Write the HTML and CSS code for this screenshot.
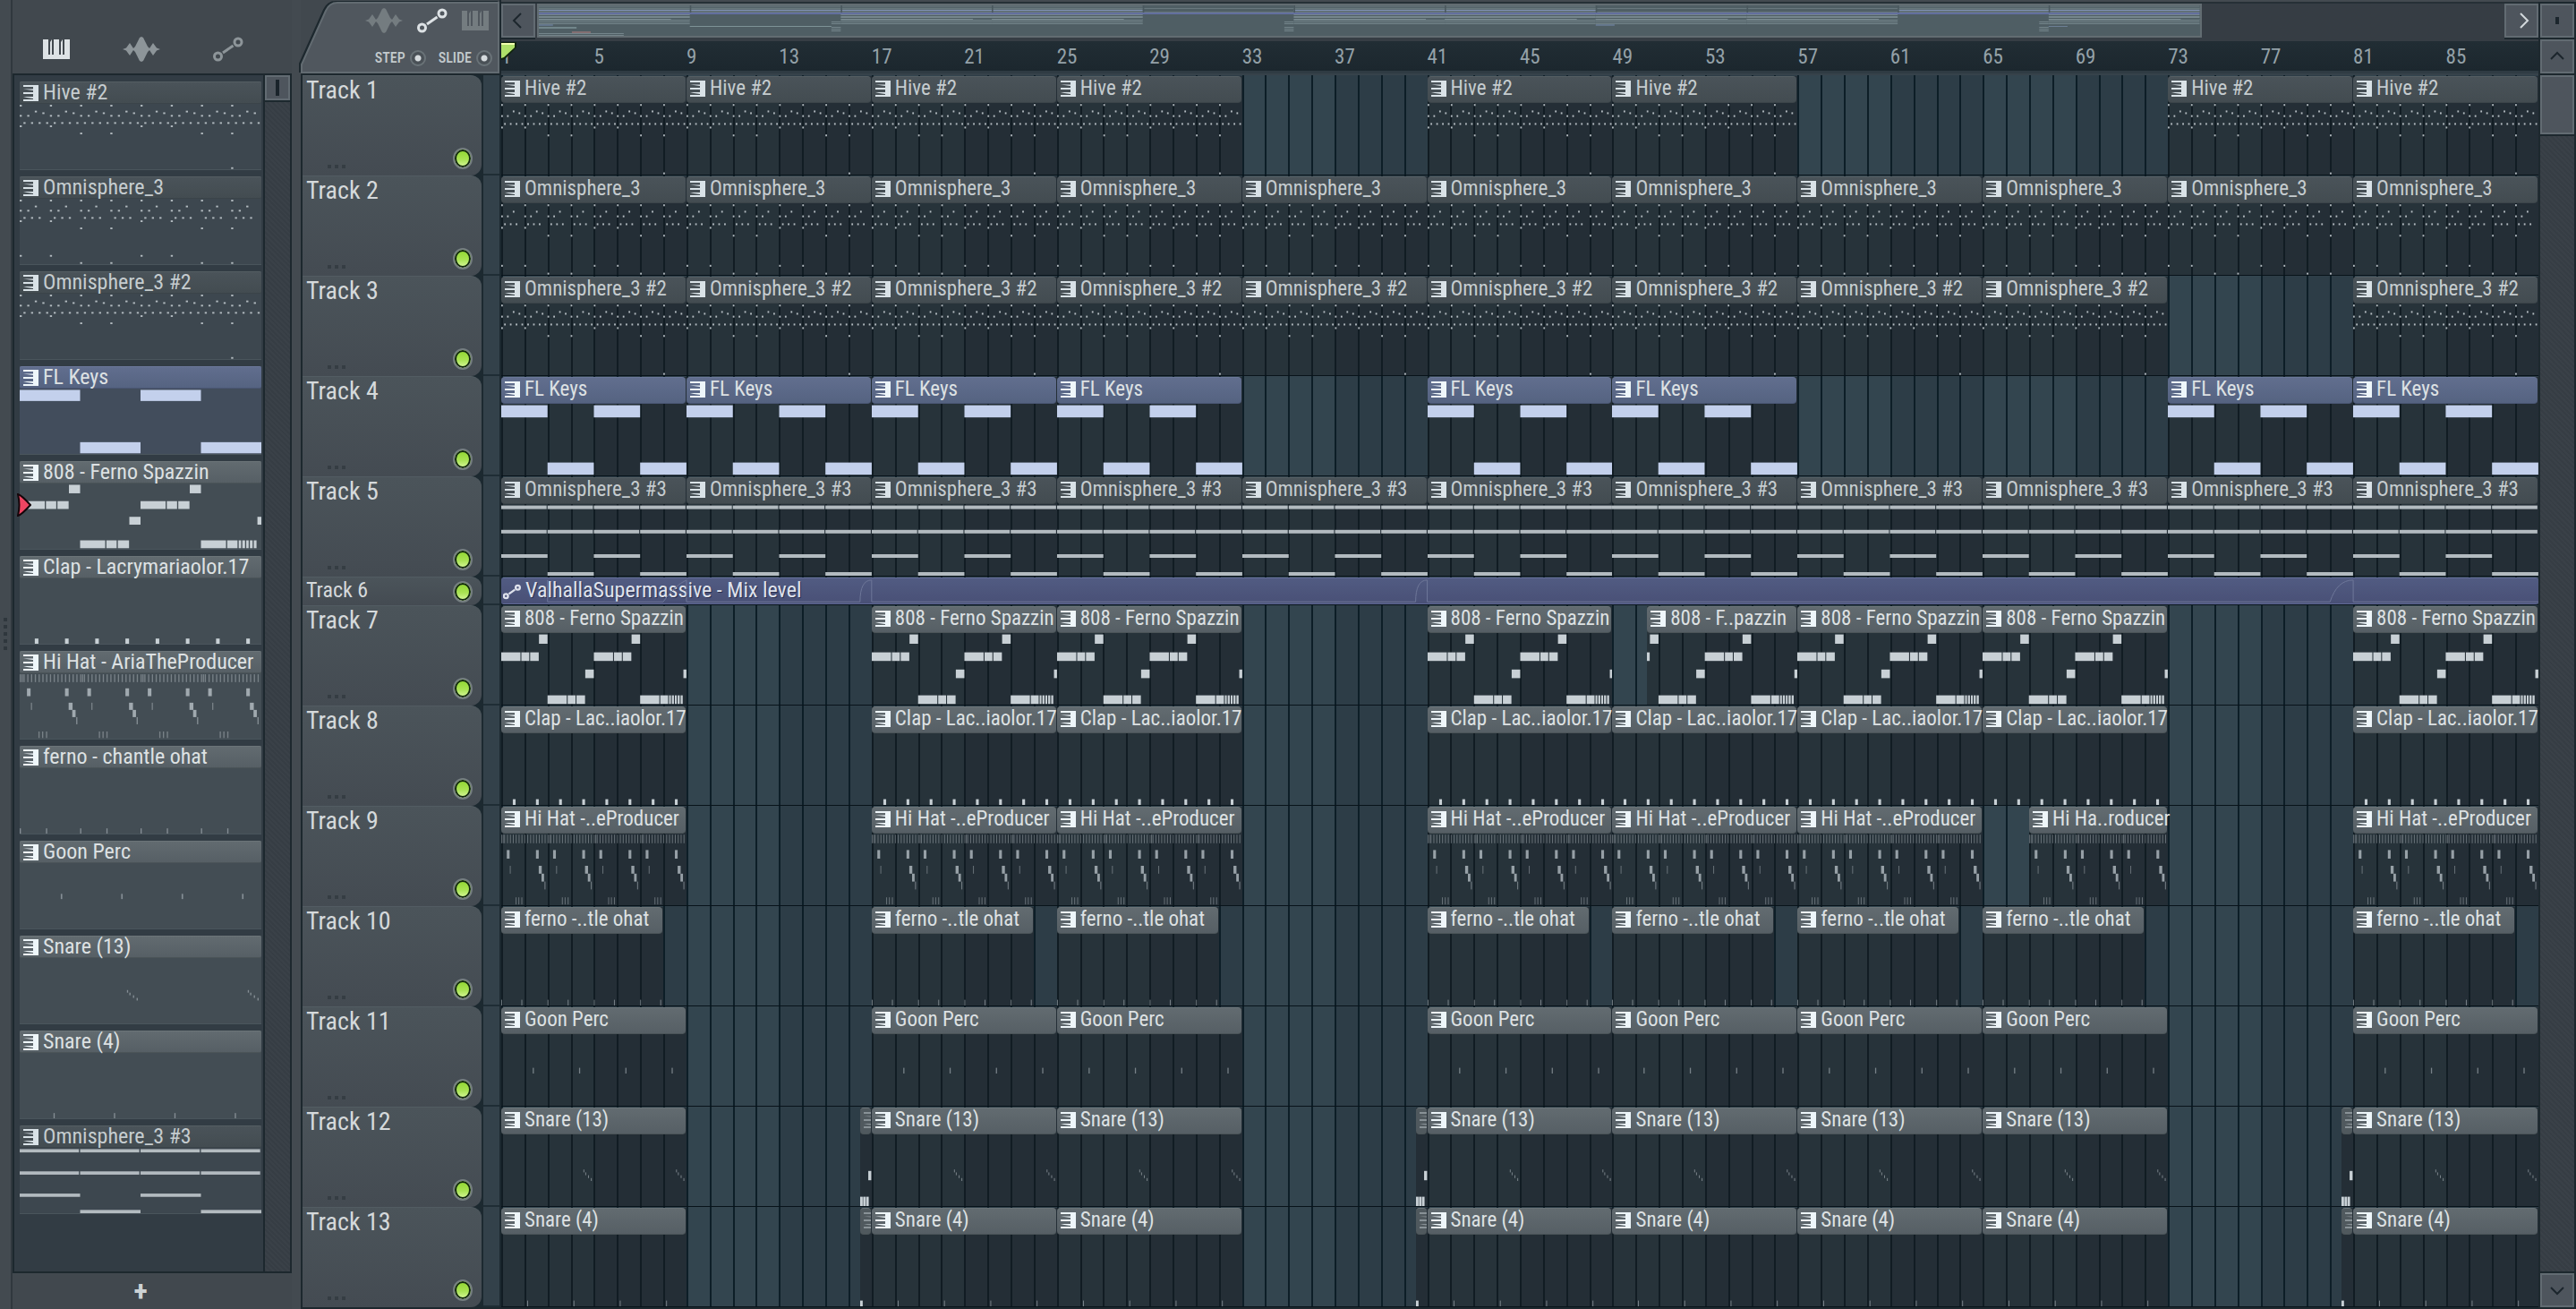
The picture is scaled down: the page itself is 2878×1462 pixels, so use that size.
FILE: index.html
```html
<!DOCTYPE html>
<html lang="en">
<head>
  <meta charset="UTF-8">
  <meta name="viewport" content="width=device-width, initial-scale=1.0">
  <title>Playlist</title>
  <link rel="stylesheet" href="styles.css">
</head>
<body>
  <!-- Shared icons -->
  <svg class="defs" aria-hidden="true">
    <symbol id="piano" viewBox="0 0 30 22">
      <path d="M0 0H6V17H8L8 3L10 0V17H12V0H18V17H20L20 3L22 0V17H24V0H30V22H0Z"/>
    </symbol>
    <symbol id="wave" viewBox="0 0 42 28">
      <path d="M0 14L4 12.500 8 7 12 13 14 11 16 7 19 1 21 0 23 1 26 7 28 11 30 13 34 7 38 12.500 42 14 38 15.500 34 21 30 15 28 17 26 21 23 27 21 28 19 27 16 21 14 17 12 15 8 21 4 15.500Z"/>
    </symbol>
    <symbol id="curve" viewBox="0 0 34 28">
      <g fill="none" stroke="currentColor">
        <circle cx="5.500" cy="22" r="4"/>
        <circle cx="28" cy="6" r="4"/>
        <path d="M11 18L22.500 10"/>
      </g>
    </symbol>
    <symbol id="pattern" viewBox="0 0 17 18">
      <path d="M0 0H17V18H0V16H11V15L4 14L0 13H11V10H0V8H11V6L4 5L0 4.500H11V2H0Z"/>
    </symbol>
  </svg>

  <div class="grip"><i></i><i></i><i></i><i></i><i></i></div>

  <!-- Pattern picker -->
  <aside class="picker">
    <nav class="picker-tabs">
      <button class="tab-icon on" aria-label="Patterns"><svg class="ico-piano"><use href="#piano"/></svg></button>
      <button class="tab-icon" aria-label="Audio clips"><svg class="ico-wave"><use href="#wave"/></svg></button>
      <button class="tab-icon" aria-label="Automation"><svg class="ico-curve"><use href="#curve"/></svg></button>
    </nav>
    <div class="picker-body">
      <div class="picker-list" id="picker"></div>
      <div class="picker-scroll"><button class="thumb" aria-label="Scroll"><i></i></button></div>
    </div>
    <button class="add" aria-label="Add pattern">+</button>
  </aside>

  <!-- Playlist -->
  <main class="playlist">
    <div class="corner">
      <svg class="corner-shape" viewBox="0 0 222 80" preserveAspectRatio="none">
        <path d="M1 79V70L28 10Q32 1 41 1H221V79Z"/>
      </svg>
      <div class="corner-icons">
        <button class="tab-icon dim" aria-label="Audio"><svg class="ico-wave"><use href="#wave"/></svg></button>
        <button class="tab-icon on" aria-label="Automation"><svg class="ico-curve"><use href="#curve"/></svg></button>
        <button class="tab-icon dim" aria-label="Patterns"><svg class="ico-piano"><use href="#piano"/></svg></button>
      </div>
      <div class="corner-opts">
        <label>STEP <input type="checkbox" class="dot"></label>
        <label>SLIDE <input type="checkbox" class="dot"></label>
      </div>
    </div>

    <div class="top">
      <div class="overview">
        <button class="arrow" aria-label="Scroll left"><svg viewBox="0 0 34 34"><path d="M20 9L12 17L20 25"/></svg></button>
        <div class="overview-track">
          <div class="overview-thumb" id="overview"></div>
        </div>
        <button class="arrow lit" aria-label="Scroll right"><svg viewBox="0 0 34 34"><path d="M16 9L24 17L16 25"/></svg></button>
      </div>
      <div class="ruler" id="ruler">
        <svg class="playhead" viewBox="0 0 18 20">
          <path d="M0 0H17V6L4 19L0 20Z" fill="#10240c"/>
          <path d="M0 1H15V6L3 17L0 18Z" fill="#aee06a"/>
          <path d="M0 1H15V3H0Z" fill="#f2ffb0"/>
        </svg>
      </div>
    </div>

    <div class="side-top">
      <button class="arrow" aria-label="Zoom"><svg viewBox="0 0 34 34"><path d="M17 13V21" stroke-width="4"/></svg></button>
      <button class="arrow" aria-label="Scroll up"><svg viewBox="0 0 34 34"><path d="M10 20L17 13L24 20"/></svg></button>
    </div>

    <div class="heads" id="heads"></div>

    <div class="lanes">
      <div class="bars" id="bars"></div>
      <div id="lanes"></div>
    </div>

    <div class="side">
      <button class="side-thumb" aria-label="Scroll tracks"></button>
      <div class="side-track"></div>
      <button class="arrow" aria-label="Scroll down"><svg viewBox="0 0 34 34"><path d="M10 14L17 21L24 14"/></svg></button>
    </div>
  </main>

  <script src="script.js"></script>
</body>
</html>
```
FILE: styles.css
```css
* {
  box-sizing: border-box;
}

body {
  margin: 0;
  display: flex;
  min-height: 100vh;
  background: #434a50;
  color: #d3d9dc;
  font-family: "Roboto Condensed", "Liberation Sans Narrow", Roboto, sans-serif;
  font-size: 24px;
}

button {
  padding: 0;
  border: 0;
  background: none;
  color: inherit;
  font: inherit;
}

svg {
  display: block;
}

.defs {
  position: absolute;
  width: 0;
  height: 0;
}

/* Icons */
.ico-piano { width: 30px; height: 24px; }
.ico-wave { width: 42px; height: 32px; }
.ico-curve { width: 34px; height: 30px; stroke-width: 3px; }

.tab-icon {
  display: flex;
  color: #8d9599;
}

.tab-icon svg,
.clip-icon {
  fill: currentColor;
}

.tab-icon.on { color: #dde2e5; }
.tab-icon.dim { color: #747c80; }

/* Left edge handle */
.grip {
  width: 14px;
  flex: none;
  display: flex;
  flex-direction: column;
  justify-content: center;
  align-items: center;
  gap: 4px;
  padding-bottom: 46px;
  border-right: 2px solid #30383e;
}

.grip i {
  width: 4px;
  height: 4px;
  background: #2f373d;
}

/* Pattern picker */
.picker {
  width: 312px;
  flex: none;
  display: flex;
  flex-direction: column;
  background: #41484e;
}

.picker-tabs {
  height: 82px;
  display: flex;
  align-items: center;
  justify-content: space-between;
  padding: 28px 54px 0 34px;
}

.picker-body {
  flex: 1;
  display: flex;
  border: 2px solid #1d282e;
}

.picker-list {
  flex: 1;
  min-width: 0;
  padding: 7px 2px 0 6px;
  background: #323c44;
  border-right: 2px solid #1d282e;
}

.picker-scroll {
  width: 28px;
  background: repeating-linear-gradient(45deg, #363d44 0 2px, #3a4148 2px 4px);
}

.thumb {
  display: flex;
  align-items: center;
  justify-content: center;
  width: 28px;
  height: 28px;
  background: #4e555d;
  border: 2px solid #626b72;
  box-shadow: 0 2px 0 #1d282e;
}

.thumb i {
  width: 4px;
  height: 18px;
  background: #1a242b;
}

.add {
  height: 40px;
  padding-right: 26px;
  color: #ccd2d4;
  font-size: 32px;
  font-weight: 700;
  line-height: 40px;
}

/* Picker entries */
.pattern {
  height: 99px;
  margin-bottom: 7px;
  position: relative;
  display: flex;
  flex-direction: column;
  background: #434d54;
}

.pattern .clip-head {
  height: 25px;
  line-height: 22px;
  font-size: 24px;
  padding-left: 4px;
  border-radius: 2px;
}

.pattern .clip-icon {
  margin-top: 3px;
}

.pattern .notes {
  border: 1px solid #4a555c;
  border-width: 0 0 1px;
}

.pattern.dark { background: #3d474f; }
.pattern.blue { background: #424d5c; }

.picked {
  position: absolute;
  left: -3px;
  top: 36px;
  width: 16px;
  height: 26px;
}

/* Playlist frame */
.playlist {
  flex: 1;
  min-width: 0;
  margin-left: 10px;
  display: grid;
  grid-template-columns: 224px minmax(0, 1fr) 42px;
  grid-template-rows: 84px auto;
  align-content: start;
  background: #1d282e;
}

.corner {
  position: relative;
  display: flex;
  flex-direction: column;
  justify-content: space-between;
  padding: 7px 12px 7px;
  background: #41484e;
  border-right: 2px solid #1d282e;
  border-bottom: 2px solid #1d282e;
}

.corner-shape {
  position: absolute;
  inset: 2px 0 0 0;
  width: 100%;
  height: 80px;
  fill: #50575e;
  stroke: #626b71;
  stroke-width: 2px;
  filter: drop-shadow(-2px -1px 0 #1d282e);
}

.corner-icons,
.corner-opts {
  position: relative;
  display: flex;
  align-items: center;
  justify-content: flex-end;
  gap: 16px;
}

.corner-opts {
  gap: 14px;
  margin-right: -4px;
}

.corner-opts label {
  display: flex;
  align-items: center;
  gap: 5px;
  color: #c3cacd;
  font-size: 16px;
  font-weight: 500;
  line-height: 20px;
}

.dot {
  appearance: none;
  width: 18px;
  height: 18px;
  margin: 0;
  border: 2px solid #6a7378;
  border-radius: 50%;
  background: radial-gradient(circle, #d5dadd 0 3px, #4a5157 4px);
}

/* Overview scroll bar */
.top {
  background: #36424a;
  display: flex;
  flex-direction: column;
}

.overview {
  display: flex;
  height: 46px;
  padding: 4px 0;
  border-top: 2px solid #434a50;
  background: #363d44;
  box-shadow: inset 0 2px 0 #263036;
}

.arrow {
  flex: none;
  width: 38px;
  height: 38px;
  background: #4e555d;
  border: 2px solid #626b72;
  color: #1c262d;
}

.overview .arrow {
  margin-top: -2px;
  box-shadow: 0 2px 0 #1d282e;
}

.arrow svg {
  width: 34px;
  height: 34px;
  fill: none;
  stroke: currentColor;
  stroke-width: 2px;
}

.arrow.lit { color: #d3d9dc; }

.overview-track {
  flex: 1;
  min-width: 0;
  margin: -2px 0 0 2px;
}

.overview-thumb {
  width: 84.6%;
  height: 38px;
  border: 2px solid #626c71;
  background: #4f5e64;
}

.overview-thumb svg {
  width: 100%;
  height: 34px;
}

/* Bar numbers */
.ruler {
  position: relative;
  height: 36px;
  padding-top: 3px;
  display: grid;
  grid-template-columns: repeat(22, minmax(0, 1fr));
  align-items: center;
  background: linear-gradient(#212d34, #1c272e);
  border-bottom: 3px solid #2f3b43;
  color: #94a1a8;
  font-size: 23px;
  line-height: 30px;
}

.playhead {
  position: absolute;
  left: 0;
  top: 1px;
  width: 18px;
  height: 20px;
}

.side-top {
  display: flex;
  flex-direction: column;
  gap: 2px;
  padding: 2px 2px 0;
  border-top: 2px solid #434a50;
}

/* Track headers */
.heads {
  border-left: 2px solid #1d282e;
}

.head {
  height: 112px;
  display: flex;
  padding-right: 2px;
  background: #1c2930;
}

.head-panel {
  width: 200px;
  display: flex;
  flex-direction: column;
  justify-content: space-between;
  background: linear-gradient(#4b545a, #444b52);
  border-top: 1px solid #525c62;
  border-radius: 0 12px 12px 0;
}

.head-meter {
  flex: 1;
  margin-left: 2px;
  background: #33414a;
  border-bottom: 2px solid #1f2d35;
}

.head label {
  padding-left: 4px;
  color: #d5d9db;
  font-size: 28px;
  line-height: 32px;
}

.head-foot {
  display: flex;
  align-items: flex-end;
  justify-content: space-between;
  padding: 0 10px 7px 28px;
}

.more {
  display: flex;
  gap: 4px;
  padding-bottom: 1px;
}

.more i {
  width: 4px;
  height: 4px;
  background: #353d43;
}

.led {
  appearance: none;
  width: 22px;
  height: 24px;
  margin: 0;
  border: 2px solid #757e81;
  border-radius: 50%;
  background: linear-gradient(#8fd62f, #a9e353 55%, #dbfba0);
  box-shadow: inset 0 0 0 2px #12280f;
}

/* Thin automation track */
.head.short { height: 32px; }

.short .head-panel {
  flex-direction: row;
}

.short label {
  font-size: 24px;
  line-height: 28px;
}

.short .head-foot {
  padding: 0 10px 3px 0;
}

.short .more { display: none; }

/* Lanes */
.lanes {
  position: relative;
  background: #2d3d47;
}

.bars {
  position: absolute;
  inset: 0;
  display: grid;
  grid-template-columns: repeat(88, minmax(0, 1fr));
}

.bars i { border-left: 2px solid #0d1e27; }
.bars .light { background: #33454f; }

.lane {
  position: relative;
  height: 112px;
  padding-top: 1px;
  border-bottom: 1px solid #08131a;
  display: grid;
  grid-template-columns: repeat(176, minmax(0, 1fr));
  grid-template-rows: minmax(0, 1fr);
}

.lane.short { height: 32px; }

.clip {
  display: flex;
  flex-direction: column;
  min-width: 0;
  background: rgba(24, 27, 32, 0.42);
}

.clip-head {
  flex: none;
  height: 30px;
  display: flex;
  gap: 5px;
  padding-left: 4px;
  white-space: nowrap;
  font-size: 23px;
  line-height: 26px;
  color: #dde1e3;
  background: linear-gradient(#626b70, #565f65);
  border: 1px solid #6b7478;
  border-width: 1px 0;
  border-bottom-color: #4b5458;
  border-radius: 4px;
}

.clip .clip-head {
  margin-right: 1px;
}

.clip-icon {
  flex: none;
  width: 17px;
  height: 18px;
  margin-top: 4px;
  color: #eef6fa;
}

.notes {
  flex: 1;
  height: 0;
  min-height: 0;
  width: 100%;
  fill: #c8d0d5;
}

.dark .clip-head {
  color: #c5cccf;
  background: linear-gradient(#4a5359, #434c51);
  border-color: #555e63;
  border-bottom-color: #3b4449;
}

.dark .clip-icon { color: #d9e2e7; }
.dark .notes { fill: #b3bbc0; }

.blue .clip-head {
  background: linear-gradient(#616e8e, #556381);
  border-color: #6b789a;
  border-bottom-color: #4a5674;
}

.blue .notes { fill: #c3d0ec; }

.tiny .clip-head {
  overflow: hidden;
  background: #50595e;
}

.tiny .clip-icon { color: #899297; }

/* Automation clip */
.auto {
  grid-column: 1 / -1;
  position: relative;
  display: flex;
  gap: 5px;
  padding-left: 2px;
  line-height: 26px;
  color: #dfe2ec;
  background: linear-gradient(#515b82, #495076);
  border: 1px solid #626b98;
  border-width: 1px 0;
  border-radius: 3px;
  text-shadow: 1px 1px 0 #2b3050;
}

.auto .ico-curve {
  width: 20px;
  height: 22px;
  margin-top: 4px;
  stroke-width: 4px;
}

.auto-line {
  position: absolute;
  inset: 0;
  width: 100%;
  height: 100%;
  fill: none;
  stroke: #6e7799;
}

/* Right scroll bar */
.side {
  display: flex;
  flex-direction: column;
  padding: 0 2px;
}

.side-thumb {
  height: 66px;
  background: #4e555d;
  border: 2px solid #626b72;
}

.side-track {
  flex: 1;
  margin: 2px 0;
  background: repeating-linear-gradient(45deg, #363d44 0 2px, #3a4148 2px 4px);
}
```
FILE: script.js
```js
const BARS = 88;

// Notes are [start bar, top %, length in bars, height %]
function arp(full) {
  const n = [];
  const dot = (x, y) => n.push([x, y, 0.07, 2.6]);
  for (let b = 0; b < 8; b++) {
    const low = b % 4 > 1;
    dot(b, 1.5);
    dot(b, 17);
    dot(b + 0.25, 17);
    dot(b + 0.5, 10.5);
    if (full) dot(b + 0.75, 13);
    [0.125, 0.375, 0.625].forEach(o => dot(b + o, 28));
    if (full) dot(b + 0.875, 28);
    dot(b, low ? 44 : 33);
    if (!full) dot(b, low ? 97 : 86);
  }
  if (full) dot(7, 97);
  return n;
}

// Splits a long note at the given bars, leaving a hairline between the parts
function split(y, h, points) {
  return points.slice(0, -1).map((p, i) => [p, y, points[i + 1] - p - 0.04, h]);
}

function repeat(every, notes) {
  const n = [];
  for (let b = 0; b < 8; b += every) {
    notes.forEach(([x, y, w, h, o]) => n.push([b + x, y, w, h, o]));
  }
  return n;
}

const hatTicks = [];
for (let b = 0; b < 8; b += 0.125) {
  hatTicks.push([b, 1.5, 0.04, 12, 0.4]);
  if (b % 2 === 0) hatTicks.push([b + 0.0625, 1.5, 0.04, 12, 0.4]);
}

const patterns = {
  hive: { name: 'Hive #2', look: 'dark', notes: arp(true) },
  omni: { name: 'Omnisphere_3', look: 'dark', notes: arp(false) },
  omni2: { name: 'Omnisphere_3 #2', look: 'dark', notes: arp(true) },
  keys: { name: 'FL Keys', look: 'blue', notes: repeat(4, [[0, 2, 2, 17], [2, 82, 2, 17]]) },
  bass: {
    name: '808 - Ferno Spazzin', look: '', notes: [
      [1.63, 2, 0.37, 13], [5.63, 2, 0.37, 13],
      ...split(27, 12, [0, 0.87, 1.25, 1.66]),
      ...split(27, 12, [4, 4.87, 5.25, 5.66]),
      [3.63, 51, 0.37, 12], [7.87, 51, 0.13, 12],
      ...split(87, 12, [2, 2.87, 3.25, 3.66]),
      ...split(87, 12, [6, 6.87, 7.25, 7.37, 7.5, 7.62, 7.75, 7.88])
    ]
  },
  clap: { name: 'Clap - Lacrymariaolor.17', short: 'Clap - Lac..iaolor.17', look: '', notes: repeat(1, [[0.5, 92, 0.12, 8]]) },
  hat: {
    name: 'Hi Hat - AriaTheProducer', short: 'Hi Hat -..eProducer', look: '', notes: hatTicks.concat(repeat(2, [
      [0.24, 23, 0.12, 12, 0.7], [1.5, 23, 0.12, 12, 0.7],
      [0.37, 45, 0.04, 11, 0.4], [1.62, 45, 0.13, 11, 0.7],
      [1.74, 56, 0.11, 11, 0.7], [1.87, 67, 0.04, 11, 0.5],
      [0.62, 89, 0.04, 10, 0.4], [0.74, 89, 0.04, 10, 0.4], [0.87, 89, 0.04, 10, 0.4]
    ]))
  },
  ohat: { name: 'ferno - chantle ohat', short: 'ferno -..tle ohat', look: '', notes: repeat(2, [[0, 92, 0.04, 8, 0.5], [0.87, 92, 0.04, 8, 0.5]]) },
  perc: { name: 'Goon Perc', look: '', notes: repeat(2, [[1.36, 47, 0.05, 8, 0.5]]) },
  snare13: {
    name: 'Snare (13)', look: '', notes: repeat(4, [
      [3.55, 49, 0.04, 4, 0.5], [3.63, 53, 0.04, 4, 0.5], [3.75, 57, 0.04, 4, 0.5], [3.87, 61, 0.04, 4, 0.5]
    ])
  },
  snare4: { name: 'Snare (4)', look: '', notes: repeat(2, [[1.12, 92, 0.04, 8, 0.5]]) },
  omni3: {
    name: 'Omnisphere_3 #3', look: 'dark', notes: [
      ...split(2, 5, [0, 2, 4, 6, 8]),
      ...split(36, 5, [0, 2, 4, 6, 8]),
      [0, 70, 2, 5], [4, 70, 2, 5], [2, 95, 2, 5], [6, 95, 2, 5]
    ]
  },
  fill13: { name: '', look: 'tiny', notes: [[0.35, 51, 0.13, 13], [0, 87, 0.11, 13], [0.13, 87, 0.11, 13], [0.26, 87, 0.11, 13]] },
  fill4: { name: '', look: 'tiny', notes: [[0, 92, 0.11, 8]] }
};

// Each clip is [pattern, start bar, length, offset into pattern, label]
const at = (id, starts, len = 8) => starts.map(s => [id, s, len, 0]);
const all = [0, 8, 16, 24, 32, 40, 48, 56, 64, 72, 80];
const drums = [0, 16, 24, 40, 48, 56, 64, 80];
const fills = [15.5, 39.5, 79.5];

const tracks = [
  at('hive', [0, 8, 16, 24, 40, 48, 72, 80]),
  at('omni', all),
  at('omni2', all.filter(s => s !== 72)),
  at('keys', [0, 8, 16, 24, 40, 48, 72, 80]),
  at('omni3', all),
  'auto',
  [...at('bass', [0, 16, 24, 40]), ['bass', 49.5, 6.5, 1.5, '808 - F..pazzin'], ...at('bass', [56, 64, 80])],
  at('clap', drums),
  [...at('hat', [0, 16, 24, 40, 48, 56]), ['hat', 66, 6, 2, 'Hi Ha..roducer'], ...at('hat', [80])],
  at('ohat', drums, 7),
  at('perc', drums),
  [...at('snare13', drums), ...at('fill13', fills, 0.5)].sort((a, b) => a[1] - b[1]),
  [...at('snare4', drums), ...at('fill4', fills, 0.5)].sort((a, b) => a[1] - b[1])
];

function notesSvg(notes, offset, length) {
  const rects = notes
    .filter(([x, , w]) => x + w > offset && x < offset + length)
    .map(([x, y, w, h, o]) => `<rect x="${x}" y="${y}" width="${w}" height="${h}"${o ? ` opacity="${o}"` : ''}/>`)
    .join('');
  return `<svg class="notes" viewBox="${offset} 0 ${length} 100" preserveAspectRatio="none">${rects}</svg>`;
}

function clipHead(label) {
  return `<div class="clip-head"><svg class="clip-icon"><use href="#pattern"/></svg><span>${label}</span></div>`;
}

// Picker list
const order = ['hive', 'omni', 'omni2', 'keys', 'bass', 'clap', 'hat', 'ohat', 'perc', 'snare13', 'snare4', 'omni3'];
const marker = '<svg class="picked" viewBox="0 0 16 26"><path d="M1 1Q5 2 15 13Q5 24 1 25Q4 13 1 1Z" fill="#ee4562" stroke="#14060a" stroke-width="2"/></svg>';
document.getElementById('picker').innerHTML = order.map(id => {
  const p = patterns[id];
  return `<div class="pattern ${p.look}">${clipHead(p.name)}${notesSvg(p.notes, 0, 8)}${id === 'bass' ? marker : ''}</div>`;
}).join('');

// Bar numbers and grid
let numbers = '';
let bars = '';
for (let b = 0; b < BARS; b++) {
  if (b % 4 === 0) numbers += `<span>${b + 1}</span>`;
  bars += b % 8 < 4 ? '<i class="light"></i>' : '<i></i>';
}
document.getElementById('ruler').insertAdjacentHTML('afterbegin', numbers);
document.getElementById('bars').innerHTML = bars;

// Track headers
document.getElementById('heads').innerHTML = tracks.map((t, i) => `
  <div class="head ${t === 'auto' ? 'short' : ''}">
    <div class="head-panel">
      <label for="track${i}">Track ${i + 1}</label>
      <div class="head-foot">
        <span class="more"><i></i><i></i><i></i></span>
        <input class="led" type="checkbox" id="track${i}" checked>
      </div>
    </div>
    <div class="head-meter"></div>
  </div>`).join('');

// Lanes
const autoClip = `
  <div class="auto">
    <svg class="auto-line" viewBox="0 0 88 30" preserveAspectRatio="none">
      <path vector-effect="non-scaling-stroke" d="M2 2V28H7Q7.500 8 8 2V28H15.500Q15.500 2 16 2V28H39.500Q39.500 2 40 2V28H79Q79.300 2 80 2V28H88"/>
    </svg>
    <svg class="ico-curve"><use href="#curve"/></svg>
    <span>ValhallaSupermassive - Mix level</span>
  </div>`;
document.getElementById('lanes').innerHTML = tracks.map(t => {
  if (t === 'auto') return `<div class="lane short">${autoClip}</div>`;
  return '<div class="lane">' + t.map(([id, start, len, offset, label]) => {
    const p = patterns[id];
    return `<div class="clip ${p.look}" style="grid-column: ${start * 2 + 1} / span ${len * 2}">` +
      clipHead(label || p.short || p.name) + notesSvg(p.notes, offset, len) + '</div>';
  }).join('') + '</div>';
}).join('');

// Song overview, 176 bars wide
const o = [];
const box = (x1, x2, y, h, fill) => o.push(`<rect x="${x1}" y="${y}" width="${x2 - x1}" height="${h}" fill="${fill}"/>`);
const stripe = '#75868c';
[[0, 64], [80, 112], [144, 176]].forEach(([a, b]) => {
  box(a, b, 0, 8, '#5f6d73');
  box(a, b, 2, 1, '#55646a');
  box(a, b, 5, 1, '#8191b6');
});
box(0, 176, 3, 1, '#68787d');
box(0, 176, 7, 1, '#68787d');
box(0, 176, 8, 2, '#636f9f');
[[0, 16], [32, 48], [48, 64], [80, 96], [96, 112], [112, 128], [128, 144], [160, 176]].forEach(([a, b]) => {
  [10, 12, 15, 18, 20].forEach(y => box(a, b, y, y === 12 || y === 15 ? 2 : 1, stripe));
  box(b - 2, b, 15, 1, '#4f5e64');
});
[[31, 32], [79, 80], [159, 160]].forEach(([a, b]) => {
  [18, 20, 24, 26, 28].forEach(y => box(a, b, y, 1, stripe));
});
box(16, 31, 23, 1, '#7d9296');
box(0, 1.5, 21, 2, '#63758a');
box(0, 4, 24, 2, '#71868b');
box(3.5, 5.5, 29, 2, '#836f72');
box(0, 9, 31, 1, stripe);
box(0, 9, 33, 1, stripe);
box(112, 114, 21, 2, '#63758a');
box(160, 162, 23, 1, '#6c7f95');
[16, 32, 48, 64, 80, 96, 112, 128, 144, 160].forEach(b => box(b, b + 0.15, 0, 8, '#4a585e'));
document.getElementById('overview').innerHTML =
  `<svg viewBox="0 0 176 34" preserveAspectRatio="none">${o.join('')}</svg>`;
```
